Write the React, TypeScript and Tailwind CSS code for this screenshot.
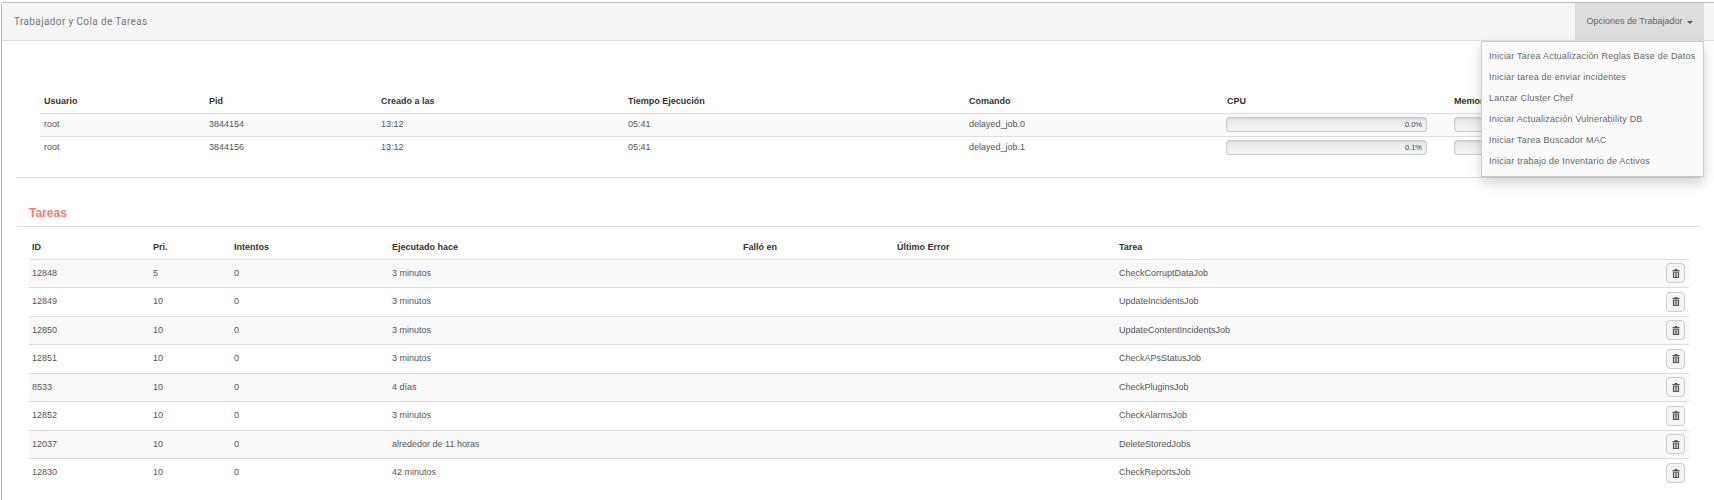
const workers = [
  { user: "root", pid: "3844154", created: "13:12", time: "05:41", cmd: "delayed_job.0", cpu: "0.0%", mem: "0.3%" },
  { user: "root", pid: "3844156", created: "13:12", time: "05:41", cmd: "delayed_job.1", cpu: "0.1%", mem: "0.3%" },
];

const tasks = [
  ["12848", "5", "0", "3 minutos", "CheckCorruptDataJob"],
  ["12849", "10", "0", "3 minutos", "UpdateIncidentsJob"],
  ["12850", "10", "0", "3 minutos", "UpdateContentIncidentsJob"],
  ["12851", "10", "0", "3 minutos", "CheckAPsStatusJob"],
  ["8533", "10", "0", "4 días", "CheckPluginsJob"],
  ["12852", "10", "0", "3 minutos", "CheckAlarmsJob"],
  ["12037", "10", "0", "alrededor de 11 horas", "DeleteStoredJobs"],
  ["12830", "10", "0", "42 minutos", "CheckReportsJob"],
];

const menuItems = [
  "Iniciar Tarea Actualización Reglas Base de Datos",
  "Iniciar tarea de enviar incidentes",
  "Lanzar Cluster Chef",
  "Iniciar Actualización Vulnerability DB",
  "Iniciar Tarea Buscador MAC",
  "Iniciar trabajo de Inventario de Activos",
];

const Bar = ({ value }: { value: string }) => (
  <div className="h-[15px] w-[201px] rounded-[3px] border border-[#ccc] bg-gradient-to-b from-[#e8e8e8] to-[#f5f5f5] pr-1 text-right text-[7.5px] leading-[13px] text-[#444] shadow-[inset_0_1px_2px_rgba(0,0,0,0.1)]">
    {value}
  </div>
);

// glyphicon style trash can
const TrashIcon = () => (
  <svg width="8" height="9" viewBox="0 0 9 10" fill="#555">
    <path d="M3 0h3v1h2.5v1.5h-8V1H3z" />
    <path fillRule="evenodd" d="M1 3h7v7H1zM2.5 4v5h.8V4zM4.1 4v5h.8V4zM5.7 4v5h.8V4z" />
  </svg>
);

const App = () => {
  return (
    <div className="h-[500px] overflow-hidden bg-white pt-[2px] pl-[1px] font-['Liberation_Sans',sans-serif] text-[9px] text-[#555]">
      <div className="relative h-[600px] rounded-tl-[3px] border-t border-l border-[#bbb]">
        <div className="flex h-[38px] items-stretch justify-between border-b border-[#ddd] bg-[#f5f5f5] pr-[10px]">
          <div className="pl-[12px] pt-[13px] font-['Roboto',sans-serif] text-[10px] leading-[12px] tracking-[0.38px] text-[#777]">
            Trabajador y Cola de Tareas
          </div>
          <div className="flex w-[129px] items-center justify-center gap-[4px] bg-[#ddd] font-['Liberation_Sans',sans-serif] text-[9px] text-[#666]">
            Opciones de Trabajador
            <span className="mt-[1px] border-x-[3px] border-t-[3px] border-x-transparent border-t-[#555]" />
          </div>
        </div>

        <div className="absolute right-[10px] top-[38px] z-10 h-[136px] w-[223px] border border-[#ccc] bg-[#fafafa] pt-[4px] shadow-[0_6px_12px_rgba(0,0,0,0.175)]">
          {menuItems.map((item) => (
            <div key={item} className="h-[21px] pl-[7px] font-['Liberation_Sans',sans-serif] text-[9px] leading-[21px] tracking-[0.22px] whitespace-nowrap text-[#666]">
              {item}
            </div>
          ))}
        </div>

        <div className="pl-[38px] pt-[49px]">
          <table className="w-[1640px] table-fixed border-collapse">
            <colgroup>
              <col className="w-[165px]" />
              <col className="w-[172px]" />
              <col className="w-[247px]" />
              <col className="w-[341px]" />
              <col className="w-[258px]" />
              <col className="w-[227px]" />
              <col />
            </colgroup>
            <thead>
              <tr className="h-[23px] border-b border-[#ddd] text-left text-[#333]">
                {["Usuario", "Pid", "Creado a las", "Tiempo Ejecución", "Comando", "CPU", "Memoria"].map((h) => (
                  <th key={h} className="pl-[4px] font-bold">{h}</th>
                ))}
              </tr>
            </thead>
            <tbody>
              {workers.map((w, i) => (
                <tr key={w.pid} className={`h-[23px] border-b border-[#ddd] last:border-b-0 ${i === 0 ? "bg-[#f9f9f9]" : ""}`}>
                  <td className="pl-[4px]">{w.user}</td>
                  <td className="pl-[4px]">{w.pid}</td>
                  <td className="pl-[4px]">{w.created}</td>
                  <td className="pl-[4px]">{w.time}</td>
                  <td className="pl-[4px]">{w.cmd}</td>
                  <td className="pl-[3px]"><Bar value={w.cpu} /></td>
                  <td className="pl-[4px]"><Bar value={w.mem} /></td>
                </tr>
              ))}
            </tbody>
          </table>
        </div>

        <div className="mt-[18px] ml-[15px] h-px w-[1683px] bg-[#ddd]" />

        <div className="mt-[28px] ml-[15px] w-[1683px] border-b border-[#ddd] pb-[6px] pl-[12px] font-['Liberation_Sans',sans-serif] text-[12px] leading-[14px] font-bold text-[#fb7a69]">
          Tareas
        </div>

        <div className="pl-[27px] pt-[9px]">
          <table className="w-[1660px] table-fixed border-collapse">
            <colgroup>
              <col className="w-[121px]" />
              <col className="w-[81px]" />
              <col className="w-[158px]" />
              <col className="w-[351px]" />
              <col className="w-[154px]" />
              <col className="w-[222px]" />
              <col />
              <col className="w-[40px]" />
            </colgroup>
            <thead>
              <tr className="h-[23px] border-b border-[#ddd] text-left text-[#333]">
                {["ID", "Pri.", "Intentos", "Ejecutado hace", "Falló en", "Último Error", "Tarea", ""].map((h) => (
                  <th key={h} className="pl-[3px] font-bold">{h}</th>
                ))}
              </tr>
            </thead>
            <tbody>
              {tasks.map((t, i) => (
                <tr key={t[0]} className={`h-[28.5px] border-b border-[#ddd] last:border-b-0 ${i % 2 === 0 ? "bg-[#f9f9f9]" : ""}`}>
                  <td className="pl-[3px]">{t[0]}</td>
                  <td className="pl-[3px]">{t[1]}</td>
                  <td className="pl-[3px]">{t[2]}</td>
                  <td className="pl-[3px]">{t[3]}</td>
                  <td />
                  <td />
                  <td className="pl-[3px]">{t[4]}</td>
                  <td>
                    <button className="ml-[17px] flex h-[20px] w-[19px] items-center justify-center rounded-[4px] border border-[#ccc] bg-[#f5f5f5]">
                      <TrashIcon />
                    </button>
                  </td>
                </tr>
              ))}
            </tbody>
          </table>
        </div>
      </div>
    </div>
  );
};

export default App;
